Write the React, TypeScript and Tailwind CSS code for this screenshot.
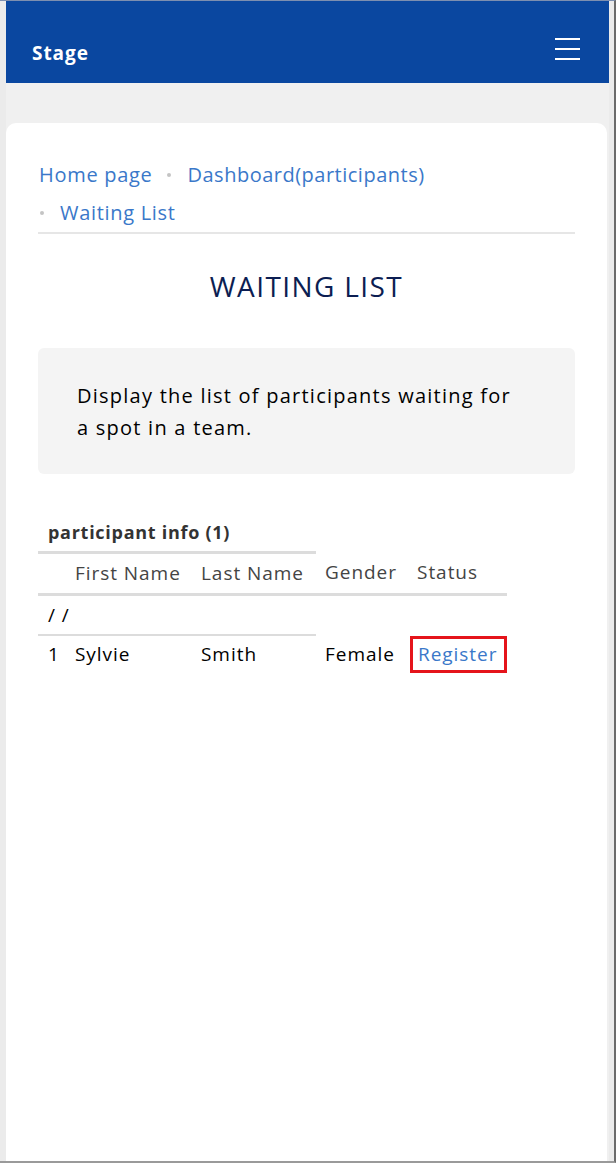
export default function App() {
  return (
    <div className="flex h-[1163px] w-[616px] flex-col border-t border-r-2 border-b-2 border-t-[#7d8fb0] border-r-[#6b6b6b] border-b-[#9a9a9a] bg-[#ebebeb] pl-[6px] pr-[5px] font-['Open_Sans',sans-serif]">
      <header className="flex h-[82px] shrink-0 items-start justify-between bg-[#0a47a0] pl-[26px] pr-[29px]">
        <span className="mt-[39px] text-[19px] font-bold leading-[26px] tracking-[0.05em] text-white">Stage</span>
        <button className="mt-[37px] flex w-[25px] flex-col gap-[8px]" aria-label="menu">
          <span className="block h-[2px] w-full bg-white" />
          <span className="block h-[2px] w-full bg-white" />
          <span className="block h-[2px] w-full bg-white" />
        </button>
      </header>

      <main className="flex flex-1 flex-col bg-[#f0f0f0] pt-[40px] pr-[2px]">
        <section className="flex-1 rounded-t-[10px] bg-white px-[32px] pt-[37px]">
          <nav className="border-b-2 border-[#e6e6e6] pb-[4px] text-[20px] tracking-[0.035em] text-[#3a78c9]">
            <div className="flex h-[38px] items-start">
              <a className="pl-[1px] leading-[30px]">Home page</a>
              <span className="ml-[15px] mr-[16px] mt-[13px] h-[4px] w-[4px] rounded-full bg-[#c4c4c4]" />
              <a className="leading-[30px] tracking-[0.025em]">Dashboard(participants)</a>
            </div>
            <div className="flex h-[30px] items-start">
              <span className="ml-[2px] mr-[16px] mt-[13px] h-[4px] w-[4px] rounded-full bg-[#c4c4c4]" />
              <a className="leading-[30px]">Waiting List</a>
            </div>
          </nav>

          <h1 className="mt-[32px] text-center text-[28px] leading-[40px] tracking-[0.05em] text-[#0c1e52]">WAITING LIST</h1>

          <div className="mt-[42px] rounded-[6px] bg-[#f4f4f4] pt-[32px] pb-[30px] pl-[39px] pr-[58px] text-[20px] leading-[32px] tracking-[0.062em] text-black">
            Display the list of participants waiting for a spot in a team.
          </div>

          <table className="mt-[40px] w-[469px] table-fixed whitespace-nowrap text-[19px] tracking-[0.05em] text-black">
            <colgroup>
              <col className="w-[29px]" />
              <col className="w-[127px]" />
              <col className="w-[122px]" />
              <col className="w-[94px]" />
              <col className="w-[97px]" />
            </colgroup>
            <tbody>
              <tr>
                <td colSpan={3} className="h-[38px] border-b-[3px] border-[#dcdcdc] pl-[10px] text-[18px] font-bold tracking-[0.04em] text-[#333]">
                  participant info (1)
                </td>
              </tr>
              <tr className="text-[#444]">
                <th className="h-[42px] border-b-[3px] border-[#dcdcdc] font-normal"></th>
                <th className="border-b-[3px] border-[#dcdcdc] pl-[8px] text-left font-normal">First Name</th>
                <th className="border-b-[3px] border-[#dcdcdc] pl-[7px] text-left font-normal">Last Name</th>
                <th className="border-b-[3px] border-[#dcdcdc] pl-[9px] text-left font-normal">Gender</th>
                <th className="border-b-[3px] border-[#dcdcdc] pl-[7px] text-left font-normal">Status</th>
              </tr>
              <tr>
                <td colSpan={3} className="h-[41px] border-b-2 border-[#dcdcdc] pl-[10px]">/ /</td>
              </tr>
              <tr>
                <td className="h-[38px] pl-[10px]">1</td>
                <td className="pl-[8px]">Sylvie</td>
                <td className="pl-[7px]">Smith</td>
                <td className="pl-[9px]">Female</td>
                <td className="p-0 pt-[1px]">
                  <div className="flex h-[37px] items-center border-[3px] border-[#e5141b] pl-[5px]">
                    <a className="text-[#3a78c9]">Register</a>
                  </div>
                </td>
              </tr>
            </tbody>
          </table>
        </section>
      </main>
    </div>
  )
}
